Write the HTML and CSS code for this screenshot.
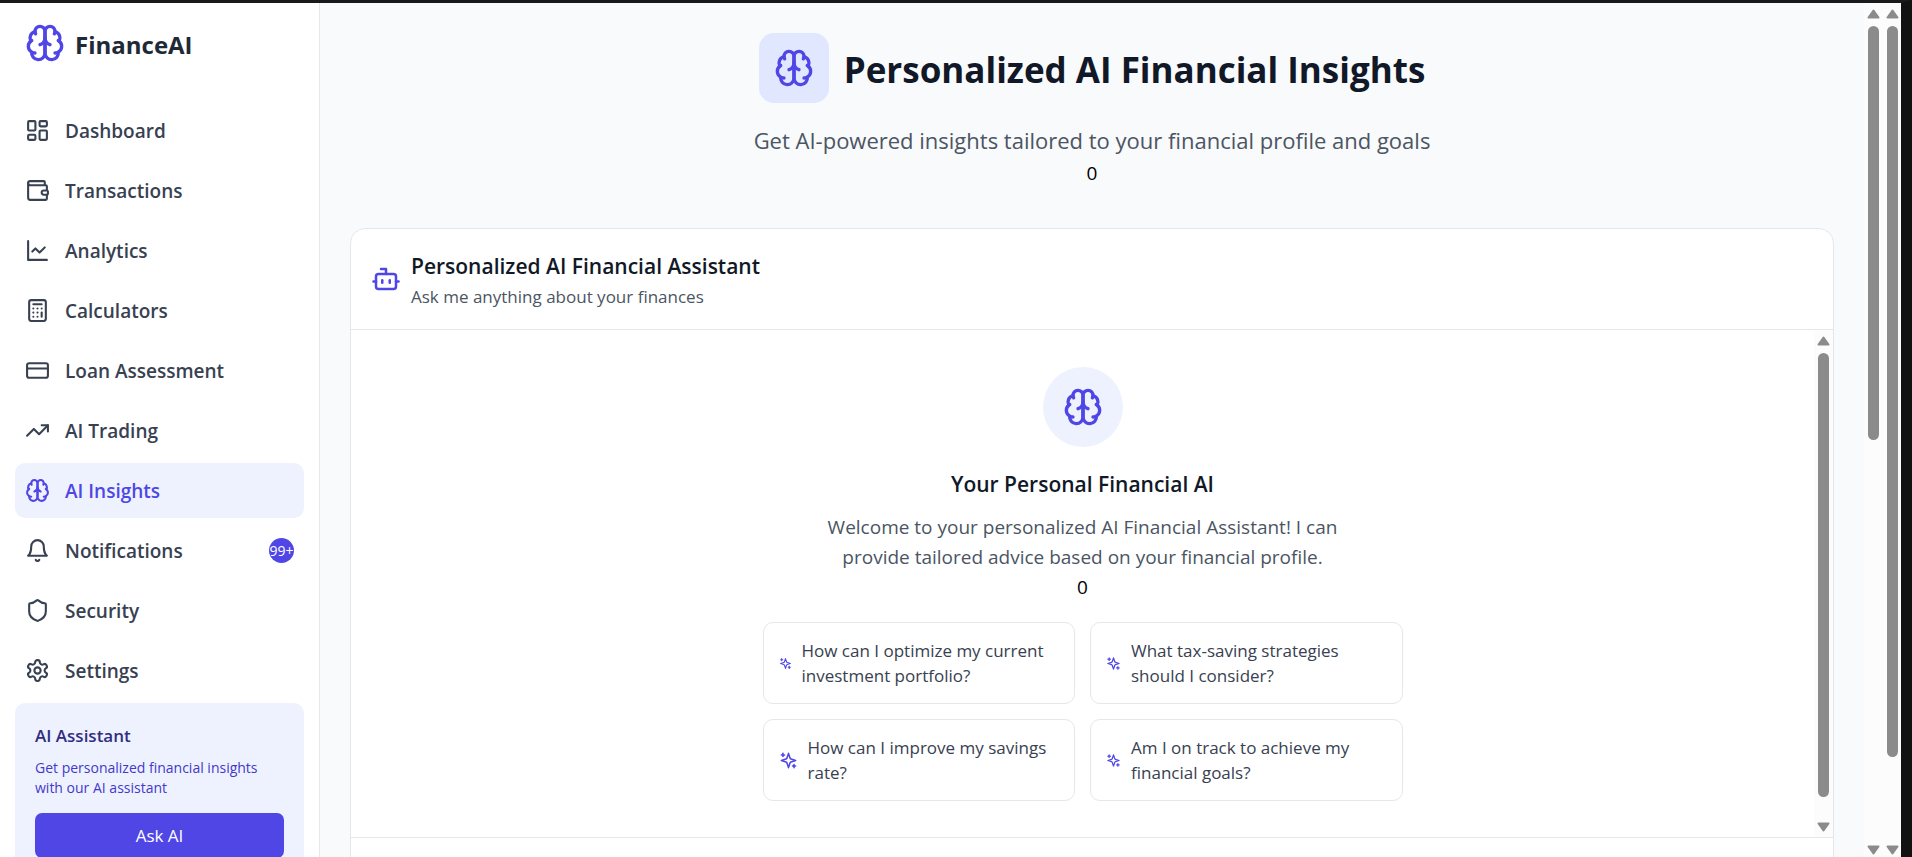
FILE: index.html
```
<!DOCTYPE html>
<html lang="en">
<head>
<meta charset="utf-8">
<title>FinanceAI - AI Insights</title>
<link rel="stylesheet" href="styles.css">
</head>
<body>
<!-- shared icons -->
<svg class="sprite" aria-hidden="true">
  <symbol id="brain" viewBox="0 0 24 24">
    <path d="M12 5a3 3 0 1 0-5.997.125 4 4 0 0 0-2.526 5.77 4 4 0 0 0 .556 6.588A4 4 0 1 0 12 18Z"/>
    <path d="M12 5a3 3 0 1 1 5.997.125 4 4 0 0 1 2.526 5.77 4 4 0 0 1-.556 6.588A4 4 0 1 1 12 18Z"/>
    <path d="M15 13a4.5 4.5 0 0 1-3-4 4.5 4.5 0 0 1-3 4"/>
    <path d="M17.599 6.5a3 3 0 0 0 .399-1.375"/>
    <path d="M6.003 5.125A3 3 0 0 0 6.401 6.5"/>
    <path d="M3.477 10.896a4 4 0 0 1 .585-.396"/>
    <path d="M19.938 10.5a4 4 0 0 1 .585.396"/>
    <path d="M6 18a4 4 0 0 1-1.967-.516"/>
    <path d="M19.967 17.484A4 4 0 0 1 18 18"/>
  </symbol>
  <symbol id="sparkles" viewBox="0 0 24 24">
    <path d="m12 3-1.912 5.813a2 2 0 0 1-1.275 1.275L3 12l5.813 1.912a2 2 0 0 1 1.275 1.275L12 21l1.912-5.813a2 2 0 0 1 1.275-1.275L21 12l-5.813-1.912a2 2 0 0 1-1.275-1.275L12 3Z"/>
    <path d="M5 3v4"/><path d="M19 17v4"/><path d="M3 5h4"/><path d="M17 19h4"/>
  </symbol>
  <symbol id="arrow" viewBox="0 0 13 10">
    <path d="M6.5 1.5 11.5 8.5H1.5Z"/>
  </symbol>
</svg>

<div class="app">
  <aside class="sidebar">
    <div class="brand">
      <svg class="icon icon-lg"><use href="#brain"/></svg>
      <span>FinanceAI</span>
    </div>

    <nav class="nav">
      <a href="#dashboard">
        <svg class="icon" viewBox="0 0 24 24"><rect width="7" height="9" x="3" y="3" rx="1"/><rect width="7" height="5" x="14" y="3" rx="1"/><rect width="7" height="9" x="14" y="12" rx="1"/><rect width="7" height="5" x="3" y="16" rx="1"/></svg>
        Dashboard
      </a>
      <a href="#transactions">
        <svg class="icon" viewBox="0 0 24 24"><path d="M19 7V4a1 1 0 0 0-1-1H5a2 2 0 0 0 0 4h15a1 1 0 0 1 1 1v4h-3a2 2 0 0 0 0 4h3a1 1 0 0 0 1-1v-2a1 1 0 0 0-1-1"/><path d="M3 5v14a2 2 0 0 0 2 2h15a1 1 0 0 0 1-1v-4"/></svg>
        Transactions
      </a>
      <a href="#analytics">
        <svg class="icon" viewBox="0 0 24 24"><path d="M3 3v18h18"/><path d="m19 9-5 5-4-4-3 3"/></svg>
        Analytics
      </a>
      <a href="#calculators">
        <svg class="icon" viewBox="0 0 24 24"><rect width="16" height="20" x="4" y="2" rx="2"/><path d="M8 6h8"/><path d="M16 14v4"/><path d="M16 10h.01"/><path d="M12 10h.01"/><path d="M8 10h.01"/><path d="M12 14h.01"/><path d="M8 14h.01"/><path d="M12 18h.01"/><path d="M8 18h.01"/></svg>
        Calculators
      </a>
      <a href="#loans">
        <svg class="icon" viewBox="0 0 24 24"><rect width="20" height="14" x="2" y="5" rx="2"/><path d="M2 10h20"/></svg>
        Loan Assessment
      </a>
      <a href="#trading">
        <svg class="icon" viewBox="0 0 24 24"><path d="m22 7-8.5 8.5-5-5L2 17"/><path d="M16 7h6v6"/></svg>
        AI Trading
      </a>
      <a href="#insights" class="active">
        <svg class="icon"><use href="#brain"/></svg>
        AI Insights
      </a>
      <a href="#notifications">
        <svg class="icon" viewBox="0 0 24 24"><path d="M6 8a6 6 0 0 1 12 0c0 7 3 9 3 9H3s3-2 3-9"/><path d="M10.3 21a1.94 1.94 0 0 0 3.4 0"/></svg>
        Notifications
        <span class="badge">99+</span>
      </a>
      <a href="#security">
        <svg class="icon" viewBox="0 0 24 24"><path d="M20 13c0 5-3.5 7.5-7.66 8.95a1 1 0 0 1-.67-.01C7.5 20.5 4 18 4 13V6a1 1 0 0 1 1-1c2 0 4.5-1.2 6.24-2.72a1.17 1.17 0 0 1 1.52 0C14.51 3.81 17 5 19 5a1 1 0 0 1 1 1z"/></svg>
        Security
      </a>
      <a href="#settings">
        <svg class="icon" viewBox="0 0 24 24"><path d="M12.22 2h-.44a2 2 0 0 0-2 2v.18a2 2 0 0 1-1 1.73l-.43.25a2 2 0 0 1-2 0l-.15-.08a2 2 0 0 0-2.73.73l-.22.38a2 2 0 0 0 .73 2.73l.15.1a2 2 0 0 1 1 1.72v.51a2 2 0 0 1-1 1.74l-.15.09a2 2 0 0 0-.73 2.73l.22.38a2 2 0 0 0 2.73.73l.15-.08a2 2 0 0 1 2 0l.43.25a2 2 0 0 1 1 1.73V20a2 2 0 0 0 2 2h.44a2 2 0 0 0 2-2v-.18a2 2 0 0 1 1-1.73l.43-.25a2 2 0 0 1 2 0l.15.08a2 2 0 0 0 2.73-.73l.22-.39a2 2 0 0 0-.73-2.73l-.15-.08a2 2 0 0 1-1-1.74v-.5a2 2 0 0 1 1-1.74l.15-.09a2 2 0 0 0 .73-2.73l-.22-.38a2 2 0 0 0-2.73-.73l-.15.08a2 2 0 0 1-2 0l-.43-.25a2 2 0 0 1-1-1.73V4a2 2 0 0 0-2-2z"/><circle cx="12" cy="12" r="3"/></svg>
        Settings
      </a>
    </nav>

    <section class="assistant-box">
      <h3>AI Assistant</h3>
      <p>Get personalized financial insights with our AI assistant</p>
      <button type="button">Ask AI</button>
    </section>
  </aside>

  <main class="content">
    <header class="page-header">
      <div class="page-title">
        <span class="title-icon"><svg class="icon icon-lg"><use href="#brain"/></svg></span>
        <h1>Personalized AI Financial Insights</h1>
      </div>
      <p>Get AI-powered insights tailored to your financial profile and goals</p>
      <div>0</div>
    </header>

    <section class="chat">
      <div class="chat-header">
        <svg class="icon icon-md" viewBox="0 0 24 24"><path d="M12 8V4H8"/><rect width="16" height="12" x="4" y="8" rx="2"/><path d="M2 14h2"/><path d="M20 14h2"/><path d="M15 13v2"/><path d="M9 13v2"/></svg>
        <div>
          <h2>Personalized AI Financial Assistant</h2>
          <p>Ask me anything about your finances</p>
        </div>
      </div>

      <div class="chat-body">
        <div class="welcome">
          <span class="welcome-icon"><svg class="icon icon-lg"><use href="#brain"/></svg></span>
          <h3>Your Personal Financial AI</h3>
          <p>Welcome to your personalized AI Financial Assistant! I can<br>provide tailored advice based on your financial profile.</p>
          <div>0</div>
          <div class="suggestions">
            <button type="button"><svg class="icon icon-xs"><use href="#sparkles"/></svg><span>How can I optimize my current<br>investment portfolio?</span></button>
            <button type="button"><svg class="icon icon-sm"><use href="#sparkles"/></svg><span>What tax-saving strategies<br>should I consider?</span></button>
            <button type="button"><svg class="icon icon-rg"><use href="#sparkles"/></svg><span>How can I improve my savings<br>rate?</span></button>
            <button type="button"><svg class="icon icon-sm"><use href="#sparkles"/></svg><span>Am I on track to achieve my<br>financial goals?</span></button>
          </div>
        </div>
        <div class="scrollbar scrollbar-chat" aria-hidden="true">
          <svg class="arrow"><use href="#arrow"/></svg>
          <div class="track"><div class="thumb"></div></div>
          <svg class="arrow down"><use href="#arrow"/></svg>
        </div>
      </div>
      <div class="chat-footer"></div>
    </section>
  </main>

  <div class="scrollbar scrollbar-content" aria-hidden="true">
    <svg class="arrow"><use href="#arrow"/></svg>
    <div class="track"><div class="thumb"></div></div>
    <svg class="arrow down"><use href="#arrow"/></svg>
  </div>
  <div class="scrollbar scrollbar-page" aria-hidden="true">
    <svg class="arrow"><use href="#arrow"/></svg>
    <div class="track"><div class="thumb"></div></div>
    <svg class="arrow down"><use href="#arrow"/></svg>
  </div>
</div>
</body>
</html>
```
FILE: styles.css
```
* {
  box-sizing: border-box;
}

body, h1, h2, h3, p {
  margin: 0;
}

body {
  font: 19px/30px "Open Sans", "Noto Sans", sans-serif;
  color: #000;
}

button {
  font: inherit;
  cursor: pointer;
}

.sprite {
  position: absolute;
  width: 0;
  height: 0;
}

.app {
  display: flex;
  height: 100vh;
  overflow: hidden;
  border-top: 3px solid #1a1a1a;
  border-right: 11px solid #121212;
  background: #f9fafb;
}

/* icons */
.icon {
  flex: none;
  width: 25px;
  height: 25px;
  fill: none;
  stroke: currentColor;
  stroke-width: 2;
  stroke-linecap: round;
  stroke-linejoin: round;
}
.icon-xs { width: 13px; height: 13px; }
.icon-sm { width: 15px; height: 15px; }
.icon-rg { width: 19px; height: 19px; }
.icon-md { width: 30px; height: 30px; }
.icon-lg { width: 40px; height: 40px; }

/* sidebar */
.sidebar {
  flex: none;
  width: 320px;
  background: #fff;
  border-right: 1px solid #e5e7eb;
}

.brand {
  display: flex;
  align-items: center;
  gap: 10px;
  height: 80px;
  padding: 0 25px;
  color: #4f46e5;
  font-size: 24px;
  font-weight: 700;
  line-height: 35px;
}
.brand span {
  padding-top: 2px;
  color: #1f2937;
}

.nav {
  display: flex;
  flex-direction: column;
  gap: 5px;
  padding: 20px 15px 5px;
}
.nav a {
  display: flex;
  align-items: center;
  gap: 15px;
  height: 55px;
  padding: 0 10px;
  border-radius: 10px;
  color: #374151;
  font-weight: 600;
  line-height: 28px;
  text-decoration: none;
}
.nav a.active {
  background: #eef2ff;
  color: #4f46e5;
}

.badge {
  display: flex;
  align-items: center;
  justify-content: center;
  width: 25px;
  height: 25px;
  margin-left: auto;
  border-radius: 50%;
  background: #4f46e5;
  color: #fff;
  font-size: 14px;
  font-weight: 400;
}

.assistant-box {
  margin: 0 15px;
  padding: 20px;
  border-radius: 10px;
  background: #eef2ff;
}
.assistant-box h3 {
  margin-bottom: 10px;
  color: #312e81;
  font-size: 17px;
  font-weight: 600;
  line-height: 25px;
}
.assistant-box p {
  margin-bottom: 15px;
  color: #4338ca;
  font-size: 14px;
  line-height: 20px;
}
.assistant-box button {
  width: 100%;
  height: 45px;
  border: 0;
  border-radius: 7px;
  background: #4f46e5;
  color: #fff;
  font-size: 17px;
}

/* main column */
.content {
  flex: 1;
  min-width: 0;
  padding: 30px;
  overflow: hidden;
}

.page-header {
  margin-bottom: 40px;
  text-align: center;
}
.page-title {
  display: flex;
  align-items: center;
  justify-content: center;
  gap: 15px;
  margin-bottom: 20px;
}
.title-icon {
  display: flex;
  padding: 15px;
  border-radius: 15px;
  background: #e0e7ff;
  color: #4f46e5;
}
.page-title h1 {
  padding-top: 3px;
  color: #111827;
  font-size: 35px;
  font-weight: 700;
  line-height: 45px;
}
.page-header p {
  color: #4b5563;
  font-size: 22px;
  line-height: 35px;
}

.chat {
  overflow: hidden;
  background: #fff;
  border: 1px solid #e5e7eb;
  border-radius: 15px;
}
.chat-header {
  display: flex;
  align-items: center;
  gap: 10px;
  padding: 20px;
  border-bottom: 1px solid #e5e7eb;
  color: #4f46e5;
}
.chat-header h2,
.welcome h3 {
  color: #111827;
  font-size: 21px;
  font-weight: 600;
  line-height: 35px;
}
.chat-header p {
  color: #4b5563;
  font-size: 17px;
  line-height: 25px;
}

.chat-body {
  display: flex;
}
.welcome {
  display: flex;
  flex: 1;
  flex-direction: column;
  align-items: center;
  padding: 37px 20px 36px;
  text-align: center;
}
.welcome-icon {
  display: flex;
  margin-bottom: 20px;
  padding: 20px;
  border-radius: 50%;
  background: #eef2ff;
  color: #4f46e5;
}
.welcome h3 {
  margin-bottom: 10px;
}
.welcome p {
  color: #4b5563;
}

.suggestions {
  display: grid;
  grid-template-columns: 1fr 1fr;
  gap: 15px;
  width: 100%;
  max-width: 640px;
  margin-top: 20px;
}
.suggestions button {
  display: flex;
  align-items: center;
  gap: 10px;
  padding: 15px;
  background: #fff;
  border: 1px solid #e5e7eb;
  border-radius: 10px;
  color: #374151;
  font-size: 17px;
  line-height: 25px;
  text-align: left;
}
.suggestions .icon {
  color: #4f46e5;
}

.chat-footer {
  height: 120px;
  border-top: 1px solid #e5e7eb;
}

/* scrollbars */
.scrollbar {
  display: flex;
  flex: none;
  flex-direction: column;
  align-items: center;
  width: 19px;
  padding: 5px 0 1px;
  background: #fcfcfc;
}
.arrow {
  flex: none;
  width: 13px;
  height: 12px;
  fill: #8b8b8b;
  stroke: #8b8b8b;
  stroke-width: 2;
  stroke-linejoin: round;
}
.arrow.down {
  transform: rotate(180deg);
}
.track {
  flex: 1;
  padding: 6px 0;
}
.thumb {
  width: 11px;
  border-radius: 6px;
  background: #8b8b8b;
}
.scrollbar-chat { padding-bottom: 4px; }
.scrollbar-chat .thumb { height: 96%; }
.scrollbar-content .thumb { height: 51%; }
.scrollbar-page { width: 18px; }
.scrollbar-page .thumb { height: 90%; }
```
